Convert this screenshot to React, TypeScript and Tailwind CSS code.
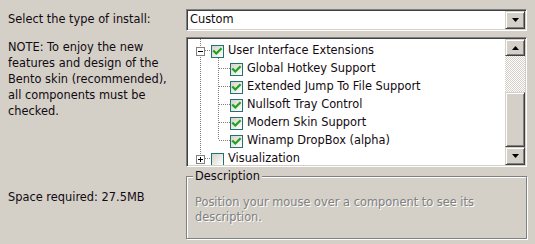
import React from "react";

const Check = () => (
  <svg width="11" height="11" viewBox="0 0 11 11" className="block">
    <path d="M2 5.2 L4.3 7.5 L8.8 3" fill="none" stroke="#21a121" strokeWidth="2.2" strokeLinecap="square" />
  </svg>
);

const CheckBox = ({ checked }: { checked: boolean }) => (
  <div className="w-[13px] h-[13px] border border-[#217272] bg-linear-to-br from-[#d6d2ca] to-[#ffffff] flex items-center justify-center shrink-0">
    {checked && <Check />}
  </div>
);

const Expander = ({ open }: { open: boolean }) => (
  <div className="w-[9px] h-[9px] border border-[#808080] bg-white relative shrink-0 flex items-center justify-center">
    <svg width="7" height="7" viewBox="0 0 7 7" className="block">
      <path d="M1 3.5 H6" stroke="#000" strokeWidth="1" />
      {!open && <path d="M3.5 1 V6" stroke="#000" strokeWidth="1" />}
    </svg>
  </div>
);

const Arrow = ({ up }: { up?: boolean }) => (
  <svg width="7" height="4" viewBox="0 0 7 4" className="block">
    {up ? <path d="M3.5 0 L7 4 L0 4 Z" fill="#000" /> : <path d="M0 0 L7 0 L3.5 4 Z" fill="#000" />}
  </svg>
);

const btn =
  "bg-[#d4d0c8] border border-t-[#d4d0c8] border-l-[#d4d0c8] border-b-[#404040] border-r-[#404040] shadow-[inset_1px_1px_0_#ffffff,inset_-1px_-1px_0_#808080] flex items-center justify-center";

const sunken =
  "border border-t-[#808080] border-l-[#808080] border-b-[#ffffff] border-r-[#ffffff] shadow-[inset_1px_1px_0_#404040,inset_-1px_-1px_0_#d4d0c8] p-[1px] bg-white";

const children = [
  "Global Hotkey Support",
  "Extended Jump To File Support",
  "Nullsoft Tray Control",
  "Modern Skin Support",
  "Winamp DropBox (alpha)",
];

export default function App() {
  return (
    <div className="w-[535px] h-[244px] bg-[#d4d0c8] font-['DejaVu_Sans',sans-serif] text-[11.4px] text-[#120a10] flex flex-col pt-[9px] overflow-hidden">
      <div className="flex h-[22px]">
        <div className="w-[186px] pl-[8px] flex items-center whitespace-nowrap">Select the type of install:</div>
        <div className={`w-[341px] h-full flex ${sunken}`}>
          <div className="flex-1 flex items-center pl-[2px]">Custom</div>
          <div className={`w-[20px] h-full ${btn}`}>
            <Arrow />
          </div>
        </div>
      </div>

      <div className="flex mt-[6px] h-[130px]">
        <div className="w-[186px] pl-[8px] pt-[2px] leading-[16px] whitespace-nowrap">
          NOTE: To enjoy the new
          <br />
          features and design of the
          <br />
          Bento skin (recommended),
          <br />
          all components must be
          <br />
          checked.
        </div>
        <div className={`w-[341px] h-full flex ${sunken}`}>
          <div className="flex-1 relative overflow-hidden pt-[3px]">
            <svg className="absolute left-0 top-0" width="60" height="126" shapeRendering="crispEdges">
              <line x1="12.5" y1="0" x2="12.5" y2="126" stroke="#808080" strokeDasharray="1 1" />
              <line x1="17" y1="11.5" x2="23" y2="11.5" stroke="#808080" strokeDasharray="1 1" />
              <line x1="30.5" y1="19" x2="30.5" y2="101" stroke="#808080" strokeDasharray="1 1" />
              {[0, 1, 2, 3, 4].map((i) => (
                <line key={i} x1="31" y1={29.5 + 18 * i} x2="42" y2={29.5 + 18 * i} stroke="#808080" strokeDasharray="1 1" />
              ))}
              <line x1="17" y1="119.5" x2="23" y2="119.5" stroke="#808080" strokeDasharray="1 1" />
            </svg>
            <div className="relative flex items-center h-[18px] pl-[8px] whitespace-nowrap">
              <Expander open />
              <div className="w-[6px]" />
              <CheckBox checked />
              <span className="ml-[4px]">User Interface Extensions</span>
            </div>
            {children.map((c) => (
              <div key={c} className="relative flex items-center h-[18px] pl-[42px] whitespace-nowrap">
                <CheckBox checked />
                <span className="ml-[4px]">{c}</span>
              </div>
            ))}
            <div className="relative flex items-center h-[18px] pl-[8px] whitespace-nowrap">
              <Expander open={false} />
              <div className="w-[6px]" />
              <CheckBox checked={false} />
              <span className="ml-[4px]">Visualization</span>
            </div>
          </div>
          <div className="w-[20px] h-full flex flex-col">
            <div className={`h-[17px] ${btn}`}>
              <Arrow up />
            </div>
            <div className="h-[36px] bg-[conic-gradient(#d4d0c8_25%,#ffffff_0_50%,#d4d0c8_0_75%,#ffffff_0)] bg-size-[2px_2px]" />
            <div className={`h-[55px] ${btn}`} />
            <div className={`h-[18px] ${btn}`}>
              <Arrow />
            </div>
          </div>
        </div>
      </div>

      <div className="flex mt-[3px]">
        <div className="w-[186px] pl-[8px] pt-[19px] leading-[16px] whitespace-nowrap">Space required: 27.5MB</div>
        <fieldset className="w-[341px] h-[69px] border border-[#808080] shadow-[inset_1px_1px_0_#ffffff,1px_1px_0_#ffffff] pl-[8px] pt-[12px]">
          <legend className="ml-[-2px] px-[2px] leading-[13px] bg-[#d4d0c8]">Description</legend>
          <div className="text-[#808080] leading-[15px] [text-shadow:1px_1px_0_#ffffff]">
            Position your mouse over a component to see its
            <br />
            description.
          </div>
        </fieldset>
      </div>
    </div>
  );
}
